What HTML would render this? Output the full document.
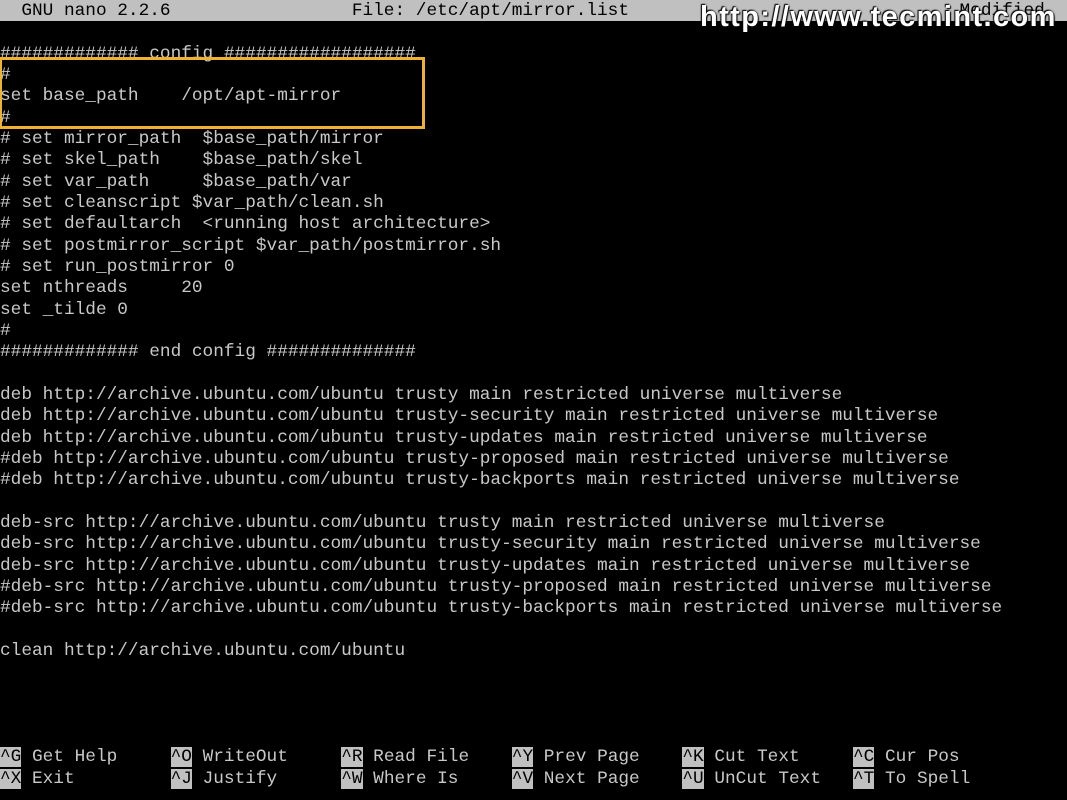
<!DOCTYPE html>
<html><head><meta charset="utf-8"><style>
html,body{margin:0;padding:0;background:#000;width:1067px;height:800px;overflow:hidden;position:relative}
.t{position:absolute;left:0;top:1px;width:1067px;height:800px;font-family:"Liberation Mono",monospace;font-size:17.78px;line-height:21.33px;color:#c8c8c8;white-space:pre;margin:0}
.bar{position:absolute;left:0;top:0;width:1067px;height:21px;background:#c0c0c0}
.inv{background:#c0c0c0;color:#000}
.box{position:absolute;left:0;top:57px;width:420px;height:66px;border:3px solid #f0b030;border-left-width:2px}
.wm{position:absolute;left:700px;top:1px;font-family:"Liberation Sans",sans-serif;font-weight:bold;font-size:29px;color:#fff;text-shadow:0 0 2px #000,1px 1px 1px #000,-1px -1px 1px #000;letter-spacing:1.4px}
</style></head><body>
<div class="bar"></div>
<pre class="t"><span style="color:#000">  GNU nano 2.2.6                 File: /etc/apt/mirror.list                               Modified</span>

############# config ##################
#
set base_path    /opt/apt-mirror
#
# set mirror_path  $base_path/mirror
# set skel_path    $base_path/skel
# set var_path     $base_path/var
# set cleanscript $var_path/clean.sh
# set defaultarch  &lt;running host architecture&gt;
# set postmirror_script $var_path/postmirror.sh
# set run_postmirror 0
set nthreads     20
set _tilde 0
#
############# end config ##############

deb http://archive.ubuntu.com/ubuntu trusty main restricted universe multiverse
deb http://archive.ubuntu.com/ubuntu trusty-security main restricted universe multiverse
deb http://archive.ubuntu.com/ubuntu trusty-updates main restricted universe multiverse
#deb http://archive.ubuntu.com/ubuntu trusty-proposed main restricted universe multiverse
#deb http://archive.ubuntu.com/ubuntu trusty-backports main restricted universe multiverse

deb-src http://archive.ubuntu.com/ubuntu trusty main restricted universe multiverse
deb-src http://archive.ubuntu.com/ubuntu trusty-security main restricted universe multiverse
deb-src http://archive.ubuntu.com/ubuntu trusty-updates main restricted universe multiverse
#deb-src http://archive.ubuntu.com/ubuntu trusty-proposed main restricted universe multiverse
#deb-src http://archive.ubuntu.com/ubuntu trusty-backports main restricted universe multiverse

clean http://archive.ubuntu.com/ubuntu




<span class="inv">^G</span> Get Help     <span class="inv">^O</span> WriteOut     <span class="inv">^R</span> Read File    <span class="inv">^Y</span> Prev Page    <span class="inv">^K</span> Cut Text     <span class="inv">^C</span> Cur Pos
<span class="inv">^X</span> Exit         <span class="inv">^J</span> Justify      <span class="inv">^W</span> Where Is     <span class="inv">^V</span> Next Page    <span class="inv">^U</span> UnCut Text   <span class="inv">^T</span> To Spell</pre>
<div class="box"></div>
<div class="wm">http://www.tecmint.com</div>
</body></html>
